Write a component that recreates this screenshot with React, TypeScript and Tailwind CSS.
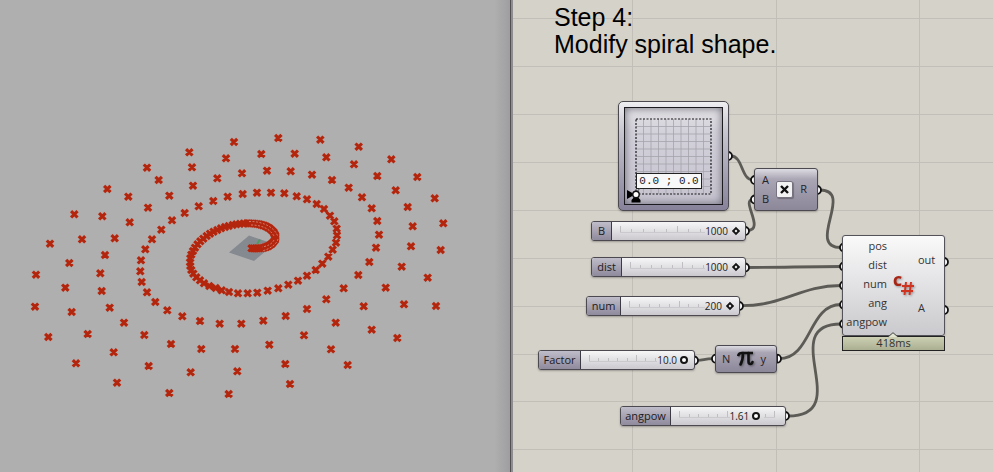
import { useState, type ReactNode } from "react";

type Point = [number, number];

/* Outer arms of the spiral, one marker each. */
const OUTER_POINTS: Point[] = [
  [234, 142], [189.3, 152.3], [226, 158.3], [192, 167.3], [147, 167.7], [158.7, 180], [217.3, 178.3],
  [193, 185.7], [107.3, 189], [128.3, 196.7], [169.3, 195.7], [148, 207.7], [74.3, 214.3], [102.3, 216.3],
  [129.7, 222.3], [82, 239.3], [114.7, 238.3], [50, 243.7], [105, 255], [69.3, 263], [278.3, 138],
  [320.3, 139.7], [261.3, 154], [294.7, 153.7], [326.3, 157.3], [358.7, 146.7], [391.3, 159.3], [354, 164.3],
  [242, 173.3], [267, 170.7], [290.7, 171.3], [312, 174.7], [332, 180], [377.3, 176], [417.3, 177],
  [348.7, 187.7], [395.7, 190.3], [362, 197.3], [434.7, 198.3], [371.7, 208.3], [407.7, 207], [377.3, 221],
  [412.7, 226.3], [443.3, 223.3], [379, 234.7], [376, 247.7], [411, 246.3], [440.7, 250], [369.3, 262],
  [401.7, 266.7], [36, 274.7], [100.3, 273.3], [65.3, 287.7], [101.7, 291], [35, 306.7], [109.7, 307.7],
  [71.7, 312], [124, 322.7], [144.3, 335], [87.7, 334], [48.3, 337], [171, 344], [201.3, 349], [235, 349],
  [113.7, 352.3], [76, 363.3], [148.7, 366], [190.7, 372.3], [237.3, 371.3], [117, 382.7], [169.3, 393],
  [228.7, 394], [358.3, 275], [427.7, 277.7], [343.7, 288.3], [385.7, 287.7], [326.3, 299.3], [363.7, 306.3],
  [404, 304.3], [436, 306], [307, 309], [285.7, 316], [263.3, 320.7], [241.3, 323.7], [335.7, 322.7],
  [371.7, 329.7], [397.3, 338], [304, 335.3], [269.3, 344.7], [331, 349.3], [285.3, 364], [347.7, 365],
  [290, 384],
];

/* Middle turn, where neighbouring markers begin to touch. */
const MIDDLE_POINTS: Point[] = [
  [219.7, 323.7], [200, 321], [182.3, 316.3], [167.3, 310.3], [155.3, 302], [147, 292.3], [141.7, 282],
  [140.3, 271.3], [141, 260.3], [145.3, 249.3], [152, 239.3], [161.3, 229.7], [172, 220.3], [184.7, 213],
  [198.7, 206.3], [213.3, 201], [227.7, 196.7], [242.7, 194], [257, 192.7], [271, 192.7], [284.3, 193.3],
  [296.7, 196.3], [307, 199.3], [316.7, 204], [324, 209], [330, 215.7], [334.3, 221.3], [336.7, 228.7],
  [337, 235.3], [336, 242.7], [332.7, 249.7], [328.3, 256.7], [322.3, 263.7], [315.7, 270], [307, 275.7],
  [298, 280.7], [288.3, 284.7], [278.3, 288.3], [267.7, 290.7], [257.3, 292.7], [247.7, 293.3], [238, 293.3],
  [229, 292], [221.7, 290.3], [215.7, 288], [209.3, 286], [204, 283.3], [200, 280.3], [196.3, 277.3],
  [193.3, 273.7], [191.3, 270], [190.3, 266], [190, 262.3], [190.3, 258.3], [191.3, 254.7], [193, 251],
  [195, 247.7], [197.5, 244.3], [200.3, 241.3], [203.3, 238.7], [206.7, 236], [210, 233.7], [213.5, 231.7],
  [217.3, 230], [221, 228.3], [225, 227], [228.7, 226], [232.7, 225], [236.3, 224.3], [240, 223.8],
  [243.5, 223.5], [247, 223.3],
];

/* Innermost hook, ending at the origin. */
const CORE_KNOTS: Point[] = [
  [247, 223.3], [253, 223.5], [259, 224.2], [264.5, 225.7], [269.5, 228.3], [273.5, 232], [275.5, 236],
  [275, 240], [272, 243.7], [268, 246.3], [263, 248], [257, 248.5], [251.5, 248.3],
];

function densify(knots: Point[], steps: number): Point[] {
  return knots.slice(1).flatMap(([x, y], i) => {
    const [px, py] = knots[i];
    return Array.from({ length: steps }, (_, s): Point => {
      const t = (s + 1) / steps;
      return [px + (x - px) * t, py + (y - py) * t];
    });
  });
}

const markers = [...OUTER_POINTS, ...MIDDLE_POINTS, ...densify(CORE_KNOTS, 3)];
const markerPath = markers
  .map(([x, y]) => `M${x - 3.2} ${y - 3.2}l6.4 6.4m0 -6.4l-6.4 6.4`)
  .join("");

function SpiralView() {
  return (
    <svg className="block h-[472px] w-[510px]" viewBox="0 0 510 472" role="img" aria-label="Spiral point cloud">
      <path d="M229 252.5 249 235.5 274 244 254 261Z" fill="#858a90" />
      <path d="M257 244 260 239.5" stroke="#4f9b62" strokeWidth="2" />
      <path d={markerPath} stroke="#c8948b" strokeWidth="4.2" opacity=".35" fill="none" />
      <path d={markerPath} stroke="#b3260d" strokeWidth="3.1" fill="none" />
      <g fill="none" stroke="#dca093" strokeWidth=".9" strokeDasharray="2 1.5" opacity=".75">
        <path d="M249 221.5C262 221 275 227 278 237" />
        <path d="M251 225C262 225 270 229 274 236" />
        <path d="M278 239C277 244 270 249 262 251" />
        <path d="M274 240C272 244 268 246 262 247" />
      </g>
    </svg>
  );
}

function CanvasGrid() {
  const rows = [18, 66, 114, 162, 210, 258, 306, 354, 401, 449];
  return (
    <svg className="absolute inset-0 h-full w-full" aria-hidden="true">
      <g stroke="#c2bfb8" strokeWidth="1">
        {rows.map((y) => (
          <line key={y} x1="0" x2="100%" y1={y + 0.5} y2={y + 0.5} />
        ))}
        {[119, 263, 406].map((x) => (
          <line key={x} x1={x + 0.5} x2={x + 0.5} y1="0" y2="100%" />
        ))}
      </g>
    </svg>
  );
}

function Wires() {
  return (
    <svg className="absolute left-0 top-0 h-[472px] w-[480px]" viewBox="513 0 480 472" aria-hidden="true">
      <g fill="none" stroke="#5d5b56" strokeWidth="2.8">
        <path d="M731 156C743 156 741 180 753 180" />
        <path d="M747 230.5C766 230.5 740 199.5 753 199.5" />
        <path d="M820 190C855 190 805 247.5 841 247.5" />
        <path d="M748 267.5C780 267.5 808 266.5 841 266.5" />
        <path d="M742 305.7C785 305.7 800 285.5 841 285.5" />
        <path d="M697 360.3C704 360.3 704 358.7 713 358.7" />
        <path d="M779 358.7C812 358.7 808 304.5 841 304.5" />
        <path d="M788 416C856 416 775 324 841 324" />
      </g>
      <g fill="#fff" stroke="#111" strokeWidth="1.8">
        {[[729, 156], [818, 190], [746, 231], [746, 267.5], [740, 306], [695, 360.5], [778, 358.7], [786, 416], [945, 262], [945, 310]].map(
          ([x, y]) => (
            <path key={`${x}-${y}`} d={`M${x - 1} ${y - 4}a4 4 0 0 1 0 8z`} />
          ),
        )}
        {[[754, 180], [754, 199.5], [715, 358.7], [843, 247.5], [843, 266.5], [843, 285.5], [843, 304.7], [843, 324]].map(
          ([x, y]) => (
            <path key={`${x}-${y}`} d={`M${x + 1} ${y - 4}a4 4 0 0 0 0 8z`} />
          ),
        )}
      </g>
    </svg>
  );
}

type SliderProps = {
  id: string;
  place: string;
  labelWidth: string;
  max: number;
  step: number;
  initial: number;
  digits: number;
  round?: boolean;
};

function SliderNode({ id, place, labelWidth, max, step, initial, digits, round }: SliderProps) {
  const [value, setValue] = useState(initial);
  const thumb = round
    ? "[&::-webkit-slider-thumb]:rounded-full [&::-webkit-slider-thumb]:border-2 [&::-webkit-slider-thumb]:size-2"
    : "[&::-webkit-slider-thumb]:rotate-45 [&::-webkit-slider-thumb]:border-2 [&::-webkit-slider-thumb]:size-[6px]";
  return (
    <div
      className={`absolute flex h-5 overflow-hidden rounded-[3px] border border-[#4c4a50] bg-linear-to-b from-[#f6f6f7] to-[#cbc9ce] shadow-[0_1px_2px_#0004] ${place}`}
    >
      <label
        htmlFor={id}
        className={`flex shrink-0 items-center justify-center border-r border-[#3c3a42] bg-linear-to-b from-[#c0bdca] to-[#8f8a9c] pb-px text-[11px] leading-4 text-[#1c1b20] ${labelWidth}`}
      >
        {id}
      </label>
      <div className="relative mr-[10px] ml-2 flex-1">
        <div className="absolute inset-x-0 top-[5px] flex h-[6px] items-end border-b border-[#cbc9cd]">
          {Array.from({ length: 10 }, (_, i) => (
            <span key={i} className={`flex-1 border-l border-[#c0bec2] ${i % 5 === 0 ? "h-[6px]" : "h-[3px]"}`} />
          ))}
          <span className="h-[6px] w-px bg-[#c0bec2]" />
        </div>
        <div
          className="absolute inset-y-0 flex items-center bg-linear-to-b from-[#f6f6f7] to-[#cbc9ce] pr-[7px] pb-px"
          style={{ right: `${100 - (value / max) * 100}%` }}
        >
          <output htmlFor={id} className="text-[10px] leading-4 text-[#222]">
            {value.toFixed(digits)}
          </output>
          <span className="absolute inset-y-0 left-full w-2 bg-linear-to-b from-[#f6f6f7] to-[#cbc9ce]" />
        </div>
        <input
          id={id}
          type="range"
          min={0}
          max={max}
          step={step}
          value={value}
          onChange={(e) => setValue(Number(e.target.value))}
          className={`absolute inset-y-0 -left-1 h-full w-[calc(100%+8px)] appearance-none bg-transparent [&::-webkit-slider-thumb]:appearance-none [&::-webkit-slider-thumb]:border-solid [&::-webkit-slider-thumb]:border-[#151515] [&::-webkit-slider-thumb]:bg-white ${thumb}`}
        />
      </div>
    </div>
  );
}

function ComponentNode({ place, children }: { place: string; children: ReactNode }) {
  return (
    <div
      className={`absolute flex items-center justify-between rounded-[3px] border border-[#4c4a50] bg-linear-to-b from-[#dddbe2] from-0% via-[#aaa6b4] via-25% to-[#8c8799] pb-px text-[11px] leading-4 text-[#242329] shadow-[0_1px_2px_#0004] ${place}`}
    >
      {children}
    </div>
  );
}

function MultiSlider() {
  const cells = Array.from({ length: 9 }, (_, i) => (i + 1) * 7.5);
  return (
    <div className="absolute left-[105px] top-[101px] h-[110px] w-[111px] rounded-[5px] border border-[#4c4a50] bg-linear-to-b from-[#efeef1] from-0% via-[#c9c7d0] via-26% to-[#87829a] p-[5px] shadow-[0_1px_2px_#0004]">
      <div className="relative h-full border border-[#1c1b20] bg-linear-to-b from-[#e4e3e6] from-0% via-[#d3d1da] via-24% to-[#c5c2ce] shadow-[inset_0_0_8px_#6a6676]">
        <svg className="absolute left-[10px] top-[10px] size-[77px]" viewBox="-1 -1 77 77" aria-hidden="true">
          <g stroke="#a5a3ac" strokeWidth=".8">
            {cells.map((c) => (
              <path key={c} d={`M${c} 0V75M0 ${c}H75`} />
            ))}
          </g>
          <rect width="75" height="75" fill="none" stroke="#18171b" strokeWidth="1.2" strokeDasharray="2 1.5" />
        </svg>
        <output className="absolute left-[11px] top-[65px] flex h-[16px] w-[66px] items-center justify-center border border-[#222] bg-[#f8f8f8] font-['Liberation_Mono',monospace] text-[11px] leading-3 whitespace-pre text-[#222]">
          0.0 ; 0.0
        </output>
        <svg className="absolute left-[1px] top-[77px] size-[18px]" viewBox="0 0 18 18" aria-hidden="true">
          <path d="M1 5 9 9.5 1 14ZM5.5 17.5V15L10 10l4.5 5v2.5Z" fill="#000" />
          <path d="M11 7 14 3" stroke="#444" />
          <circle cx="10" cy="9.5" r="3.2" fill="#fff" stroke="#111" strokeWidth="1.4" />
        </svg>
      </div>
    </div>
  );
}

function ScriptNode() {
  return (
    <div className="absolute left-[329px] top-[235px] w-[103px]">
      <div className="relative flex h-[101px] justify-between rounded-[3px] border border-[#55535a] bg-linear-to-b from-[#fafafa] to-[#cac9cd] pr-2 text-[11px] text-[#333] shadow-[0_1px_2px_#0004]">
        <ul className="flex w-11 flex-col text-right leading-[19px]">
          {["pos", "dist", "num", "ang", "angpow"].map((name) => (
            <li key={name}>{name}</li>
          ))}
        </ul>
        <ul className="flex w-[18px] flex-col leading-[48px]">
          <li>out</li>
          <li>A</li>
        </ul>
        <div className="absolute left-[50px] top-[37px] flex text-[#a82515]" aria-label="C#">
          <span className="text-[14px] leading-4 font-extrabold drop-shadow-[1px_1px_1px_#0005]">C</span>
          <svg className="mt-[8px] -ml-px h-[15px] w-[13px] drop-shadow-[1px_1px_1px_#0005]" viewBox="0 0 13 15" aria-hidden="true">
            <path d="M5 1 3.500 14M10 1 8.500 14M1 5h12M0 10h12" fill="none" stroke="#d03420" strokeWidth="2" />
          </svg>
        </div>
      </div>
      <div className="relative flex h-[15px] items-center justify-center border border-[#222] bg-linear-to-b from-[#cdd0b4] to-[#abaf91] pb-px text-[11px] leading-3 text-[#333]">
        <svg className="absolute -top-[5px] left-[45px] h-[6px] w-[10px]" viewBox="0 0 10 6" aria-hidden="true">
          <path d="M0 5 5 .7 10 5" fill="#e4e6d4" stroke="#444" />
          <path d="M1 5.5h8" stroke="#cdd0b4" />
        </svg>
        418ms
      </div>
    </div>
  );
}

export default function App() {
  return (
    <main className="flex min-h-screen overflow-hidden font-['Open_Sans','Noto_Sans',sans-serif]">
      <section className="w-[510px] shrink-0 bg-linear-to-r from-[#afafaf] from-97% to-[#9f9da0]">
        <SpiralView />
      </section>
      <div className="w-[3px] shrink-0 border-l border-[#514f52] bg-[#8f8d8f]" />
      <section className="relative min-w-0 flex-1 overflow-hidden bg-[#d5d2ca]">
        <CanvasGrid />
        <h1 className="relative pt-1 pl-[41px] font-['Liberation_Sans',Arial,sans-serif] text-[25px] leading-[27px] text-black">
          Step 4:
          <br />
          Modify spiral shape.
        </h1>
        <Wires />
        <MultiSlider />
        <ComponentNode place="left-[241px] top-[168px] h-[43px] w-[64px] pr-[10px] pl-[7px]">
          <ul className="leading-[19px]">
            <li>A</li>
            <li>B</li>
          </ul>
          <span className="flex size-[17px] items-center justify-center rounded-[2px] border border-[#77747f] bg-[#f3f3f3] shadow-[1px_1px_1px_#0004]">
            <svg className="size-[9px]" viewBox="0 0 9 9" aria-hidden="true">
              <path d="M1 1 8 8M8 1 1 8" stroke="#111" strokeWidth="2.4" />
            </svg>
          </span>
          <span>R</span>
        </ComponentNode>
        <ComponentNode place="left-[202px] top-[345px] h-[28px] w-[62px] pr-[10px] pl-[6px]">
          <span>N</span>
          <svg className="h-[15px] w-[17px] drop-shadow-[1px_1px_1px_#0006]" viewBox="0 0 17 15" aria-hidden="true">
            <path d="M1 5Q2 2 4.500 2H16" fill="none" stroke="#111" strokeWidth="2.6" />
            <path d="M6 2Q6 9 3.500 13.500M11.500 2V10.500Q11.500 13 13.500 13 15 13 15.500 11" fill="none" stroke="#111" strokeWidth="2.6" strokeLinecap="round" />
          </svg>
          <span>y</span>
        </ComponentNode>
        <SliderNode id="B" place="left-[78px] top-[221px] w-[155px]" labelWidth="w-5" max={1000} step={1} initial={1000} digits={0} />
        <SliderNode id="dist" place="left-[78px] top-[257px] w-[155px]" labelWidth="w-[30px]" max={1000} step={1} initial={1000} digits={0} />
        <SliderNode id="num" place="left-[73px] top-[296px] w-[154px]" labelWidth="w-[34px]" max={200} step={1} initial={200} digits={0} />
        <SliderNode id="Factor" place="left-[25px] top-[350px] w-[157px]" labelWidth="w-[42px]" max={10} step={0.1} initial={10} digits={1} round />
        <SliderNode id="angpow" place="left-[107px] top-[406px] w-[166px]" labelWidth="w-[50px]" max={2} step={0.01} initial={1.61} digits={2} round />
        <ScriptNode />
      </section>
    </main>
  );
}
